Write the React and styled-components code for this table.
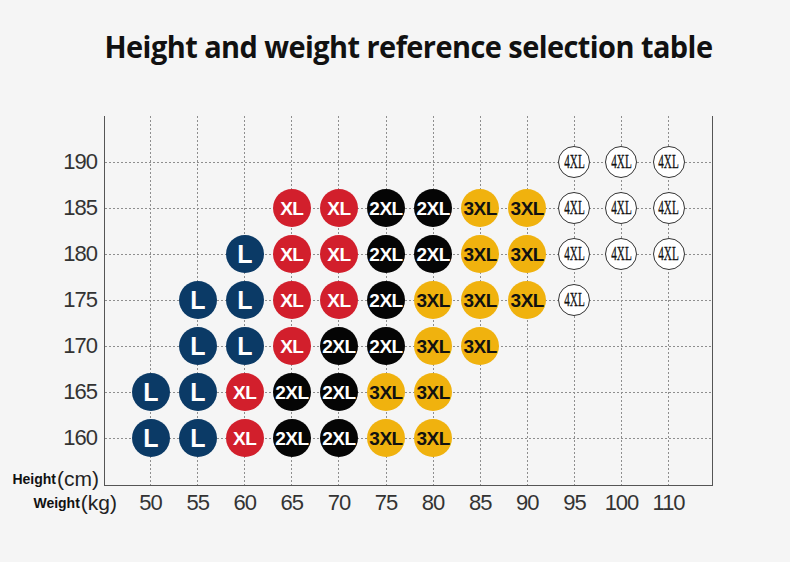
import React from 'react';
import styled, { createGlobalStyle, css } from 'styled-components';

const GlobalStyle = createGlobalStyle`
  html, body {
    margin: 0;
    padding: 0;
    background: #f5f5f5;
  }
  body {
    font-family: "Liberation Sans", Arial, sans-serif;
    color: #333;
  }
`;

const Page = styled.div`
  width: 790px;
  height: 562px;
  overflow: hidden;
  display: grid;
  grid-template-columns: 104px 609px;
  grid-template-rows: 116px 370px auto;
`;

const Title = styled.h1`
  grid-column: 2;
  justify-self: center;
  margin: 0;
  padding-top: 28px;
  font-family: "Open Sans", "Liberation Sans", sans-serif;
  font-weight: 700;
  font-size: 31px;
  line-height: 36px;
  letter-spacing: -0.6px;
  color: #111;
  white-space: nowrap;
  transform: scaleX(0.934);
`;

const YAxis = styled.div`
  grid-column: 1;
  grid-row: 2;
  display: grid;
  grid-template-rows: 23px repeat(7, 46px) 1fr;
`;

const YLabel = styled.div`
  justify-self: end;
  align-self: center;
  padding-right: 7px;
  font-size: 22px;
  letter-spacing: -1px;
  line-height: 1;
  color: #333;
`;

const AxisName = styled.div`
  justify-self: end;
  align-self: center;
  display: flex;
  align-items: center;
  white-space: nowrap;
  color: #111;
  padding-right: ${p => p.$pad}px;

  b {
    font-size: 14px;
    font-weight: 700;
  }
  span {
    font-size: 21px;
    margin-left: 1px;
    color: #222;
  }
`;

const HeightName = styled(AxisName)`
  grid-row: 9;
  margin-top: 6px;
`;

const Plot = styled.div`
  grid-column: 2;
  grid-row: 2;
  box-sizing: border-box;
  border-left: 1px solid #555;
  border-right: 1px solid #555;
  border-bottom: 1px solid #555;
  display: grid;
  grid-template-columns: 22px repeat(12, 47.1px) 1fr;
  grid-template-rows: 23px repeat(7, 46px) 1fr;
`;

const VLine = styled.div`
  grid-row: 1 / -1;
  justify-self: center;
  width: 1px;
  background: repeating-linear-gradient(to bottom, #8e8e8e 0 2px, transparent 2px 4px);
`;

const HLine = styled.div`
  grid-column: 1 / -1;
  align-self: center;
  height: 1px;
  background: repeating-linear-gradient(to right, #8e8e8e 0 2px, transparent 2px 4px);
`;

const badgeLook = {
  L: css`
    background: #0b3a66;
    color: #fff;
    font-size: 25px;
  `,
  XL: css`
    background: #d21f2c;
    color: #fff;
  `,
  '2XL': css`
    background: #050505;
    color: #fff;
  `,
  '3XL': css`
    background: #f0b20e;
    color: #111;
  `,
  '4XL': css`
    width: 32px;
    height: 32px;
    box-sizing: border-box;
    border: 1px solid #333;
    background: #fff;
    color: #111;
    font-family: "Liberation Serif", "Times New Roman", serif;
    font-weight: 400;
    font-size: 18px;
    letter-spacing: 0;
  `,
};

const Badge = styled.div`
  justify-self: center;
  align-self: center;
  width: 38px;
  height: 38px;
  border-radius: 50%;
  display: flex;
  align-items: center;
  justify-content: center;
  font-weight: 700;
  font-size: 19px;
  letter-spacing: -0.5px;
  line-height: 1;
  ${p => badgeLook[p.$size]}
`;

const Narrow = styled.span`
  display: inline-block;
  transform: scaleX(0.62);
  -webkit-text-stroke: 0.3px #111;
`;

const XAxis = styled.div`
  grid-column: 1 / -1;
  grid-row: 3;
  display: grid;
  grid-template-columns: 127px repeat(12, 47.1px);
  align-items: center;
  height: 32px;
  padding-top: 1px;
`;

const XLabel = styled.div`
  text-align: center;
  font-size: 22px;
  letter-spacing: -1px;
  line-height: 1;
  color: #333;
`;

const weights = [50, 55, 60, 65, 70, 75, 80, 85, 90, 95, 100, 110];

const rows = [
  { h: 190, cells: '. . . . . . . . . 4XL 4XL 4XL' },
  { h: 185, cells: '. . . XL XL 2XL 2XL 3XL 3XL 4XL 4XL 4XL' },
  { h: 180, cells: '. . L XL XL 2XL 2XL 3XL 3XL 4XL 4XL 4XL' },
  { h: 175, cells: '. L L XL XL 2XL 3XL 3XL 3XL 4XL' },
  { h: 170, cells: '. L L XL 2XL 2XL 3XL 3XL' },
  { h: 165, cells: 'L L XL 2XL 2XL 3XL 3XL' },
  { h: 160, cells: 'L L XL 2XL 2XL 3XL 3XL' },
];

export default function App() {
  return (
    <>
      <GlobalStyle />
      <Page>
        <Title>Height and weight reference selection table</Title>

        <YAxis>
          {rows.map((r, i) => (
            <YLabel key={r.h} style={{ gridRow: i + 2 }}>{r.h}</YLabel>
          ))}
          <HeightName $pad={5}>
            <b>Height</b><span>(cm)</span>
          </HeightName>
        </YAxis>

        <Plot>
          {weights.map((w, i) => (
            <VLine key={'v' + w} style={{ gridColumn: i + 2 }} />
          ))}
          {rows.map((r, i) => (
            <HLine key={'h' + r.h} style={{ gridRow: i + 2 }} />
          ))}
          {rows.map((r, ri) =>
            r.cells.split(' ').map((s, ci) =>
              s === '.' ? null : (
                <Badge
                  key={r.h + '-' + ci}
                  $size={s}
                  style={{ gridColumn: ci + 2, gridRow: ri + 2 }}
                >
                  {s === '4XL' ? <Narrow>{s}</Narrow> : s}
                </Badge>
              )
            )
          )}
        </Plot>

        <XAxis>
          <AxisName $pad={10}>
            <b>Weight</b><span>(kg)</span>
          </AxisName>
          {weights.map(w => (
            <XLabel key={w}>{w}</XLabel>
          ))}
        </XAxis>
      </Page>
    </>
  );
}
